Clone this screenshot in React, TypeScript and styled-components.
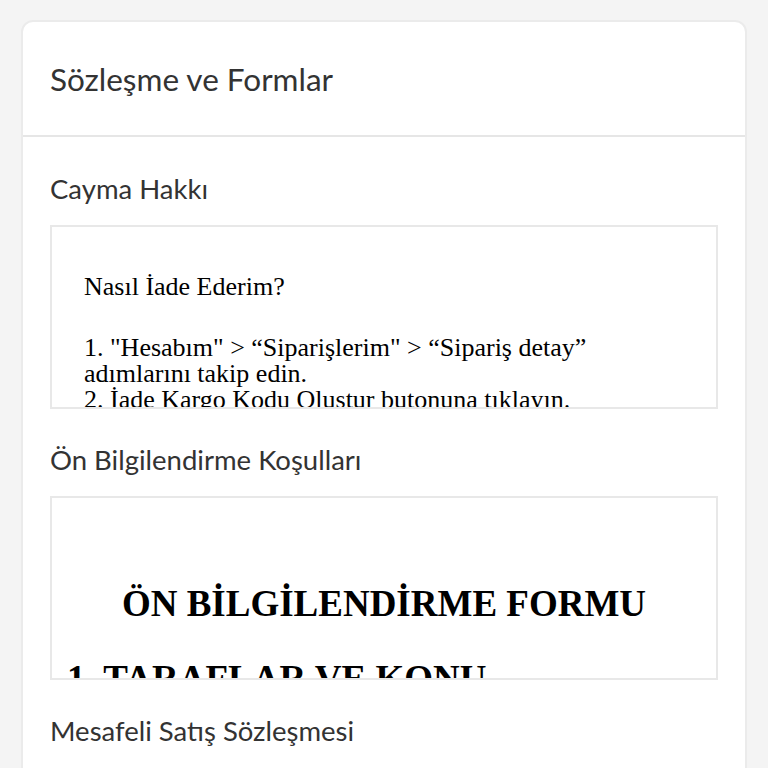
import React from 'react';
import styled, { createGlobalStyle } from 'styled-components';

const GlobalStyle = createGlobalStyle`
  html, body {
    margin: 0;
    padding: 0;
    background-color: #f4f4f4;
  }
  body {
    font-family: 'Lato', 'Noto Sans', sans-serif;
  }
`;

const Page = styled.div`
  padding: 20px 21px 0 21px;
  height: 768px;
  box-sizing: border-box;
  overflow: hidden;
`;

const Card = styled.div`
  background-color: #fff;
  border: 2px solid #ebebeb;
  border-radius: 12px;
  overflow: hidden;
`;

const CardHeader = styled.div`
  height: 113px;
  display: flex;
  align-items: center;
  padding: 0 27px;
  border-bottom: 2px solid #e6e6e6;
`;

const Title = styled.h1`
  margin: 0;
  font-size: 31.5px;
  font-weight: 400;
  color: #333;
`;

const CardBody = styled.div`
  padding: 37px 27px 40px 27px;
  display: flex;
  flex-direction: column;
`;

const Section = styled.div`
  display: flex;
  flex-direction: column;
  gap: 21px;
  margin-bottom: 36px;
`;

const SectionTitle = styled.h2`
  margin: 0;
  font-size: 27.5px;
  line-height: 30px;
  font-weight: 400;
  color: #333;
`;

const DocFrame = styled.div<{ $padTop: number; $padX: number }>`
  height: 184px;
  box-sizing: border-box;
  border: 2px solid #e8e8e8;
  overflow: hidden;
  padding: ${(p) => p.$padTop}px ${(p) => p.$padX}px 0 ${(p) => p.$padX}px;
  font-family: 'Liberation Serif', 'Times New Roman', serif;
  color: #000;
`;

const DocText = styled.p`
  margin: 0 0 35px 0;
  font-size: 26px;
  line-height: 26px;
`;

const DocHeading = styled.h3<{ $center?: boolean }>`
  margin: 0 0 33px 0;
  font-size: 37px;
  line-height: 42px;
  font-weight: 700;
  text-align: ${(p) => (p.$center ? 'center' : 'left')};
`;

const App: React.FC = () => {
  return (
    <>
      <GlobalStyle />
      <Page>
        <Card>
          <CardHeader>
            <Title>Sözleşme ve Formlar</Title>
          </CardHeader>
          <CardBody>
            <Section>
              <SectionTitle>Cayma Hakkı</SectionTitle>
              <DocFrame $padTop={47} $padX={32}>
                <DocText>Nasıl İade Ederim?</DocText>
                <DocText>
                  1. "Hesabım" &gt; “Siparişlerim" &gt; “Sipariş detay” adımlarını takip edin.
                  <br />
                  2. İade Kargo Kodu Oluştur butonuna tıklayın.
                </DocText>
              </DocFrame>
            </Section>
            <Section>
              <SectionTitle>Ön Bilgilendirme Koşulları</SectionTitle>
              <DocFrame $padTop={85} $padX={15}>
                <DocHeading $center>ÖN BİLGİLENDİRME FORMU</DocHeading>
                <DocHeading>1. TARAFLAR VE KONU</DocHeading>
              </DocFrame>
            </Section>
            <Section>
              <SectionTitle>Mesafeli Satış Sözleşmesi</SectionTitle>
            </Section>
          </CardBody>
        </Card>
      </Page>
    </>
  );
};

export default App;
